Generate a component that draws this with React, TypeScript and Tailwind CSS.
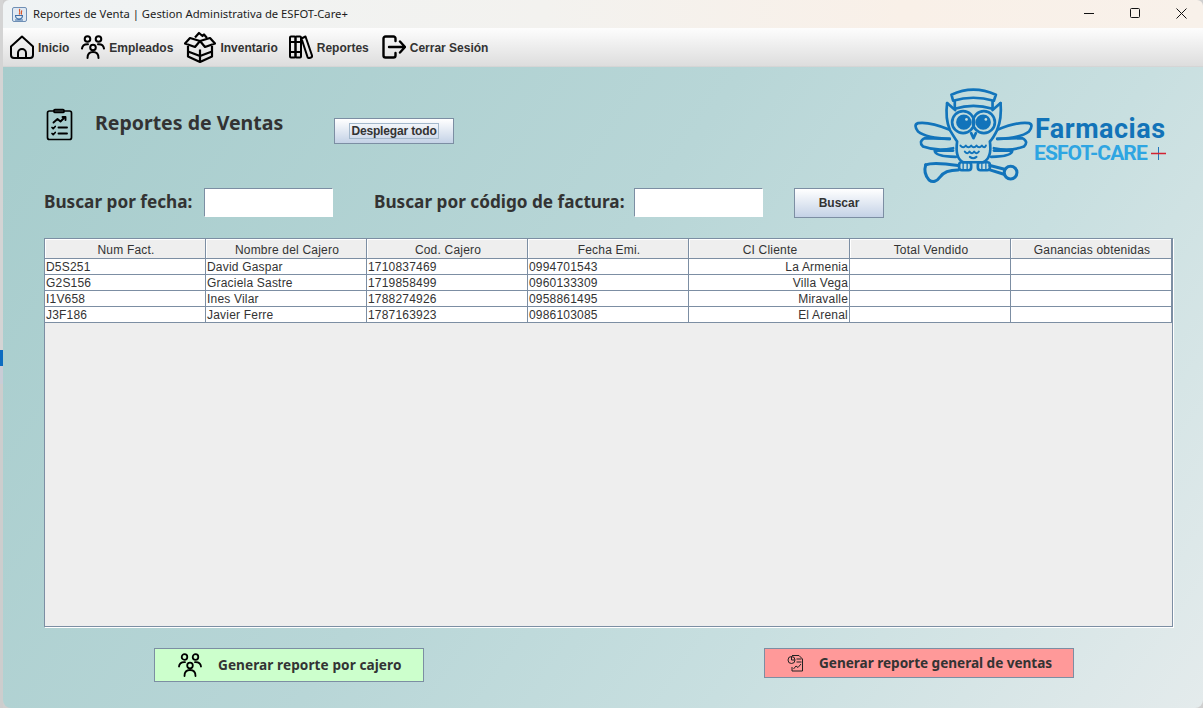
import type { ReactNode } from "react";

const rows = [
  ["D5S251", "David Gaspar", "1710837469", "0994701543", "La Armenia"],
  ["G2S156", "Graciela Sastre", "1719858499", "0960133309", "Villa Vega"],
  ["I1V658", "Ines Vilar", "1788274926", "0958861495", "Miravalle"],
  ["J3F186", "Javier Ferre", "1787163923", "0986103085", "El Arenal"],
];

const columns = [
  "Num Fact.",
  "Nombre del Cajero",
  "Cod. Cajero",
  "Fecha Emi.",
  "CI Cliente",
  "Total Vendido",
  "Ganancias obtenidas",
];

function HomeIcon() {
  return (
    <svg width="24" height="24" viewBox="0 0 24 24" fill="none" stroke="#000" strokeWidth="2" strokeLinejoin="round">
      <path d="M1 11.5 12 1.5l11 10V20a3 3 0 0 1-3 3H4a3 3 0 0 1-3-3z" />
      <path d="M8 23v-5a4 4 0 0 1 8 0v5" />
    </svg>
  );
}

function UsersIcon({ size = 24, width = 2 }: { size?: number; width?: number }) {
  return (
    <svg width={size} height={size} viewBox="0 0 24 24" fill="none" stroke="#000" strokeWidth={width} strokeLinecap="round">
      <circle cx="6.5" cy="4" r="2.8" />
      <circle cx="17.5" cy="4" r="2.8" />
      <circle cx="12" cy="12.5" r="2.8" />
      <path d="M1 13.5C1.5 10 4 9 7 9.2" />
      <path d="M23 13.5C22.5 10 20 9 17 9.2" />
      <path d="M6.5 23c0-4 2.5-6 5.5-6s5.5 2 5.5 6" />
    </svg>
  );
}

function BoxIcon() {
  return (
    <svg width="32" height="32" viewBox="0 0 32 32" fill="none" stroke="#000" strokeWidth="2.2" strokeLinejoin="round">
      <path d="M11 6.5 15 2l3.5 3 1.5-1.5 3 3.5" />
      <path d="M16 10 6 7 1 12.5l10 3.5z" />
      <path d="M16 10l10-3 5 5.5-10 3.5z" />
      <path d="M4 15v10.5L16 31l12-5.500V15" />
      <path d="M16 18.5V31" />
      <path d="M4 20.5l12 4.5 12-4.5" />
    </svg>
  );
}

function BooksIcon() {
  return (
    <svg width="24" height="24" viewBox="0 0 24 24" fill="none" stroke="#000" strokeWidth="2" strokeLinejoin="round">
      <rect x="1" y="1.5" width="5.5" height="21" rx="1" />
      <rect x="6.5" y="1.5" width="5.5" height="21" rx="1" />
      <path d="M1 7h11M1 17h11" />
      <path d="M12.5 3.5 16.5 1.5 23 20.5a1.5 1.5 0 0 1-1 2l-1.500.5a1.500 1.500 0 0 1-2-1z" />
    </svg>
  );
}

function LogoutIcon() {
  return (
    <svg width="24" height="24" viewBox="0 0 24 24" fill="none" stroke="#000" strokeWidth="2.4" strokeLinecap="round" strokeLinejoin="round">
      <path d="M13.500 6V3.500a2 2 0 0 0-2-2H3.500a2 2 0 0 0-2 2v17a2 2 0 0 0 2 2h8a2 2 0 0 0 2-2V18" />
      <path d="M7 12h16M18 6.500l5 5.500-5 5.500" />
    </svg>
  );
}

function ClipboardIcon() {
  return (
    <svg width="29" height="33" viewBox="0 0 29 33" fill="none" stroke="#000" strokeWidth="1.700" strokeLinecap="round" strokeLinejoin="round">
      <rect x="3.500" y="3" width="24" height="28.500" rx="2" />
      <path d="M10 3.500V2.500a1 1 0 0 1 1-1h8a1 1 0 0 1 1 1v1a1 1 0 0 1-1 1h-8a1 1 0 0 1-1-1z" />
      <path d="M9.500 14.500 13.500 11l3 2.500L21 9" strokeWidth="1.900" />
      <path d="M18.500 9H21.500V12" strokeWidth="1.900" />
      <path d="M8 19.500l1.200 1.200 2-2.200M8 25.500l1.200 1.200 2-2.200" />
      <path d="M14.500 19.500h8.500M14.500 25.500h8.500" strokeWidth="1.900" />
    </svg>
  );
}

function ReportIcon() {
  return (
    <svg width="17" height="18" viewBox="0 0 17 18" fill="none" stroke="#222" strokeWidth="1">
      <path d="M5 1.500h7l3.500 3.500v12H5v-4" />
      <circle cx="4.500" cy="6" r="3.500" />
      <path d="M4.500 2.500V6H8M9.500 5h5M9.500 8h5" />
      <path d="M6.500 15l2.500-3 2 1.500 3-3.500" />
    </svg>
  );
}

function OwlLogo() {
  return (
    <svg width="122" height="97" viewBox="40 260 365 290" fill="none" stroke="#1274bb" strokeWidth="8" strokeLinecap="round" strokeLinejoin="round">
      {/* sailor hat */}
      <path d="M155 280Q220 250 288 280L282 298Q220 280 160 298Z" />
      <path d="M165 300V322Q220 305 278 322V300" />
      {/* head and body */}
      <path d="M142 305 166 326M302 305 278 326" />
      <path d="M142 305Q136 350 150 385Q165 410 172 420Q165 470 190 482H250Q277 470 270 420Q280 410 292 385Q306 350 302 305" />
      {/* eyes */}
      <circle cx="190" cy="362" r="33" />
      <circle cx="252" cy="362" r="33" />
      <circle cx="192" cy="362" r="19" fill="#1274bb" />
      <circle cx="250" cy="362" r="19" fill="#1274bb" />
      <circle cx="200" cy="354" r="4" fill="#c3dcdd" stroke="none" />
      <circle cx="258" cy="354" r="4" fill="#c3dcdd" stroke="none" />
      <path d="M214 395 221 410 228 395" />
      {/* belly feathers */}
      <path d="M182 432q8 10 16 0q8 10 16 0q8 10 16 0q8 10 16 0q8 10 12 0" strokeWidth="6" />
      <path d="M195 450q8 10 14 0q8 10 14 0q8 10 14 0" strokeWidth="6" />
      <path d="M210 466q10 8 20 0" strokeWidth="6" />
      {/* wings */}
      <path d="M150 385Q90 360 55 365Q40 370 55 390Q80 410 150 412" />
      <path d="M150 412 75 410Q55 420 70 435Q110 450 160 440" />
      <path d="M160 447 105 447Q105 465 168 466" />
      <path d="M292 385Q352 360 387 365Q402 370 387 390Q362 410 292 412" />
      <path d="M292 412 367 410Q387 420 372 435Q332 450 282 440" />
      <path d="M282 447 337 447Q337 465 274 466" />
      {/* stethoscope */}
      <path d="M78 490Q100 480 175 492" strokeWidth="9" />
      <path d="M78 490Q70 515 88 535Q105 548 122 525Q135 505 175 505" strokeWidth="9" />
      <path d="M270 492 314 503" strokeWidth="9" />
      <path d="M270 505 312 518" strokeWidth="9" />
      <circle cx="332" cy="513" r="19" strokeWidth="9" />
      {/* claws */}
      <rect x="178" y="482" width="36" height="24" rx="8" />
      <rect x="234" y="482" width="36" height="24" rx="8" />
      <path d="M190 484v20M202 484v20M246 484v20M258 484v20" strokeWidth="4" />
    </svg>
  );
}

function ToolItem({ icon, label, className = "" }: { icon: ReactNode; label: string; className?: string }) {
  return (
    <div className={`flex items-center gap-[4px] ${className}`}>
      {icon}
      <span className="pt-px text-[12px] font-bold text-[#333]">{label}</span>
    </div>
  );
}

function FieldInput() {
  return <div className="h-[29px] w-[129px] border border-[#7c8ea3] border-b-white border-r-white bg-white" />;
}

export default function App() {
  return (
    <div className="flex h-[708px] w-[1203px] overflow-hidden bg-[#cfcfcf] font-['Liberation_Sans',sans-serif]">
      {/* bit of desktop behind the window */}
      <div className="flex w-[3px] flex-col">
        <div className="h-[350px] bg-[#d4d4d4]" />
        <div className="h-[16px] bg-[#0c6cc0]" />
        <div className="h-[18px] bg-[#c9ccd6]" />
        <div className="flex-1 bg-[#cdcdcd]" />
      </div>

      <div className="flex min-w-0 flex-1 flex-col overflow-hidden rounded-b-[8px] rounded-t-[6px]">
        {/* title bar */}
        <div className="flex h-[28px] items-center bg-[linear-gradient(90deg,#eff3f4_0%,#f3f2ef_45%,#f9f0e8_75%,#f8f1ea_100%)] pl-[9px]">
          <svg width="15" height="15" viewBox="0 0 15 15" className="mr-[6px]">
            <rect x="0.500" y="0.500" width="14" height="14" rx="1.500" fill="#dfe8f2" stroke="#6f8fb5" />
            <path d="M8 2C6 4 9.500 5 7 7.500M10 3.500C8.500 5 10.500 6 9 7.500" fill="none" stroke="#d9572b" strokeWidth="1.100" />
            <path d="M3.500 8.500H10.500C10.500 11 9 12 7 12S3.500 11 3.500 8.500ZM3 13H11" fill="none" stroke="#3d6ea5" strokeWidth="1.100" />
          </svg>
          <span className="font-['Noto_Sans',sans-serif] text-[11.25px] text-[#1c1c1c]">
            Reportes de Venta | Gestion Administrativa de ESFOT-Care+
          </span>
          <div className="ml-auto flex items-center">
            <svg width="46" height="28" viewBox="0 0 46 28" fill="none" stroke="#111" strokeWidth="1">
              <path d="M19 13.500H29" />
            </svg>
            <svg width="46" height="28" viewBox="0 0 46 28" fill="none" stroke="#111" strokeWidth="1">
              <rect x="19.500" y="8.500" width="9" height="9" rx="1" />
            </svg>
            <svg width="46" height="28" viewBox="0 0 46 28" fill="none" stroke="#111" strokeWidth="1">
              <path d="M19.500 8.500l10 10M29.500 8.500l-10 10" />
            </svg>
          </div>
        </div>

        {/* toolbar */}
        <div className="flex h-[39px] items-center gap-[11px] border-b border-[#d5d5d5] bg-[linear-gradient(180deg,#fdfdfd,#dddddd)] pl-[7px]">
          <ToolItem icon={<HomeIcon />} label="Inicio" className="mr-px" />
          <ToolItem icon={<UsersIcon />} label="Empleados" />
          <ToolItem icon={<BoxIcon />} label="Inventario" />
          <ToolItem icon={<BooksIcon />} label="Reportes" />
          <ToolItem icon={<LogoutIcon />} label="Cerrar Sesión" className="ml-[2px]" />
        </div>

        {/* content */}
        <div className="flex flex-1 flex-col bg-[linear-gradient(125deg,#a6cccc_0%,#b8d6d7_45%,#c8dfe0_70%,#e4ebec_100%)] pl-[41px] pr-[30px] pt-[21px]">
          <div className="flex h-[94px]">
            <div className="mt-[20px]">
              <ClipboardIcon />
            </div>
            <h1 className="ml-[22px] mt-[20px] w-[188px] whitespace-nowrap font-['Noto_Sans',sans-serif] text-[19.5px] font-bold leading-[30px] text-[#333]">
              Reportes de Ventas
            </h1>
            <button className="ml-[51px] mt-[30px] h-[26px] w-[120px] border border-[#7c8ea3] bg-[linear-gradient(180deg,#fff,#c4d2e6)] text-[12px] font-bold tracking-[-0.15px] text-[#333]">
              <span className="border border-[#a3b8cc] px-px">Desplegar todo</span>
            </button>
            <div className="ml-auto mr-[7px] flex">
              <OwlLogo />
              <div className="mt-[27px] w-[131px] font-['Roboto',sans-serif]">
                <div className="whitespace-nowrap text-[27px] font-bold leading-[29px] tracking-[0.5px] text-[#1273b8]">Farmacias</div>
                <div className="flex items-center">
                  <span className="whitespace-nowrap text-[21px] font-bold leading-[18px] tracking-[-0.9px] text-[#2ea5e2] -ml-px">ESFOT-CARE</span>
                  <svg width="15" height="15" viewBox="0 0 15 15" className="ml-auto">
                    <path d="M7.500 1V14" stroke="#1e73bb" strokeWidth="1" />
                    <path d="M0 7.500H15" stroke="#d22232" strokeWidth="1.400" />
                  </svg>
                </div>
              </div>
            </div>
          </div>

          {/* search */}
          <div className="mt-[6px] flex h-[30px] items-start font-['Noto_Sans',sans-serif] text-[17.2px] font-bold leading-[28px] text-[#333]">
            <label className="w-[160px] whitespace-nowrap">Buscar por fecha:</label>
            <FieldInput />
            <label className="ml-[41px] w-[260px] whitespace-nowrap">Buscar por código de factura:</label>
            <FieldInput />
            <button className="ml-[31px] h-[30px] w-[90px] border border-[#7c8ea3] bg-[linear-gradient(180deg,#fff,#c4d2e6)] font-['Liberation_Sans',sans-serif] text-[12px] font-bold leading-normal">
              Buscar
            </button>
          </div>

          {/* table */}
          <div className="mt-[20px] h-[389px] w-[1129px] border border-[#7c8ea3] bg-[#eeeeee] shadow-[1px_1px_0_#fff]">
            <div className="grid grid-cols-[repeat(7,161px)] text-[12px] leading-[17px] tracking-[0.2px] text-[#333]">
              {columns.map((c) => (
                <div key={c} className="flex h-[20px] items-center justify-center border-b border-r border-[#7c8ea3] bg-[#eeeeee] pl-[2px] pt-[3px] shadow-[inset_1px_1px_0_#fff]">
                  {c}
                </div>
              ))}
              {rows.map((r) => (
                <div key={r[0]} className="contents">
                  <div className="h-[16px] truncate border-b border-r border-[#7c8ea3] bg-white pl-px">{r[0]}</div>
                  <div className="h-[16px] truncate border-b border-r border-[#7c8ea3] bg-white pl-px">{r[1]}</div>
                  <div className="h-[16px] truncate border-b border-r border-[#7c8ea3] bg-white pl-px">{r[2]}</div>
                  <div className="h-[16px] truncate border-b border-r border-[#7c8ea3] bg-white pl-px">{r[3]}</div>
                  <div className="h-[16px] truncate border-b border-r border-[#7c8ea3] bg-white pr-px text-right">{r[4]}</div>
                  <div className="h-[16px] border-b border-r border-[#7c8ea3] bg-white" />
                  <div className="h-[16px] border-b border-r border-[#7c8ea3] bg-white" />
                </div>
              ))}
            </div>
          </div>

          {/* report buttons */}
          <div className="mt-[21px] flex items-start font-['Noto_Sans',sans-serif] text-[13.6px] font-bold text-[#333]">
            <button className="ml-[110px] flex h-[34px] w-[270px] items-center border border-[#7c8ea3] bg-[#ccffcc] pl-[23px]">
              <UsersIcon size={24} width={1.800} />
              <span className="ml-[16px] pt-px tracking-[0.08px]">Generar reporte por cajero</span>
            </button>
            <button className="ml-[340px] flex h-[30px] w-[310px] items-center border border-[#7c8ea3] bg-[#ff9999] pl-[22px]">
              <ReportIcon />
              <span className="ml-[15px] pt-px tracking-[-0.03px]">Generar reporte general de ventas</span>
            </button>
          </div>
        </div>
      </div>
    </div>
  );
}
